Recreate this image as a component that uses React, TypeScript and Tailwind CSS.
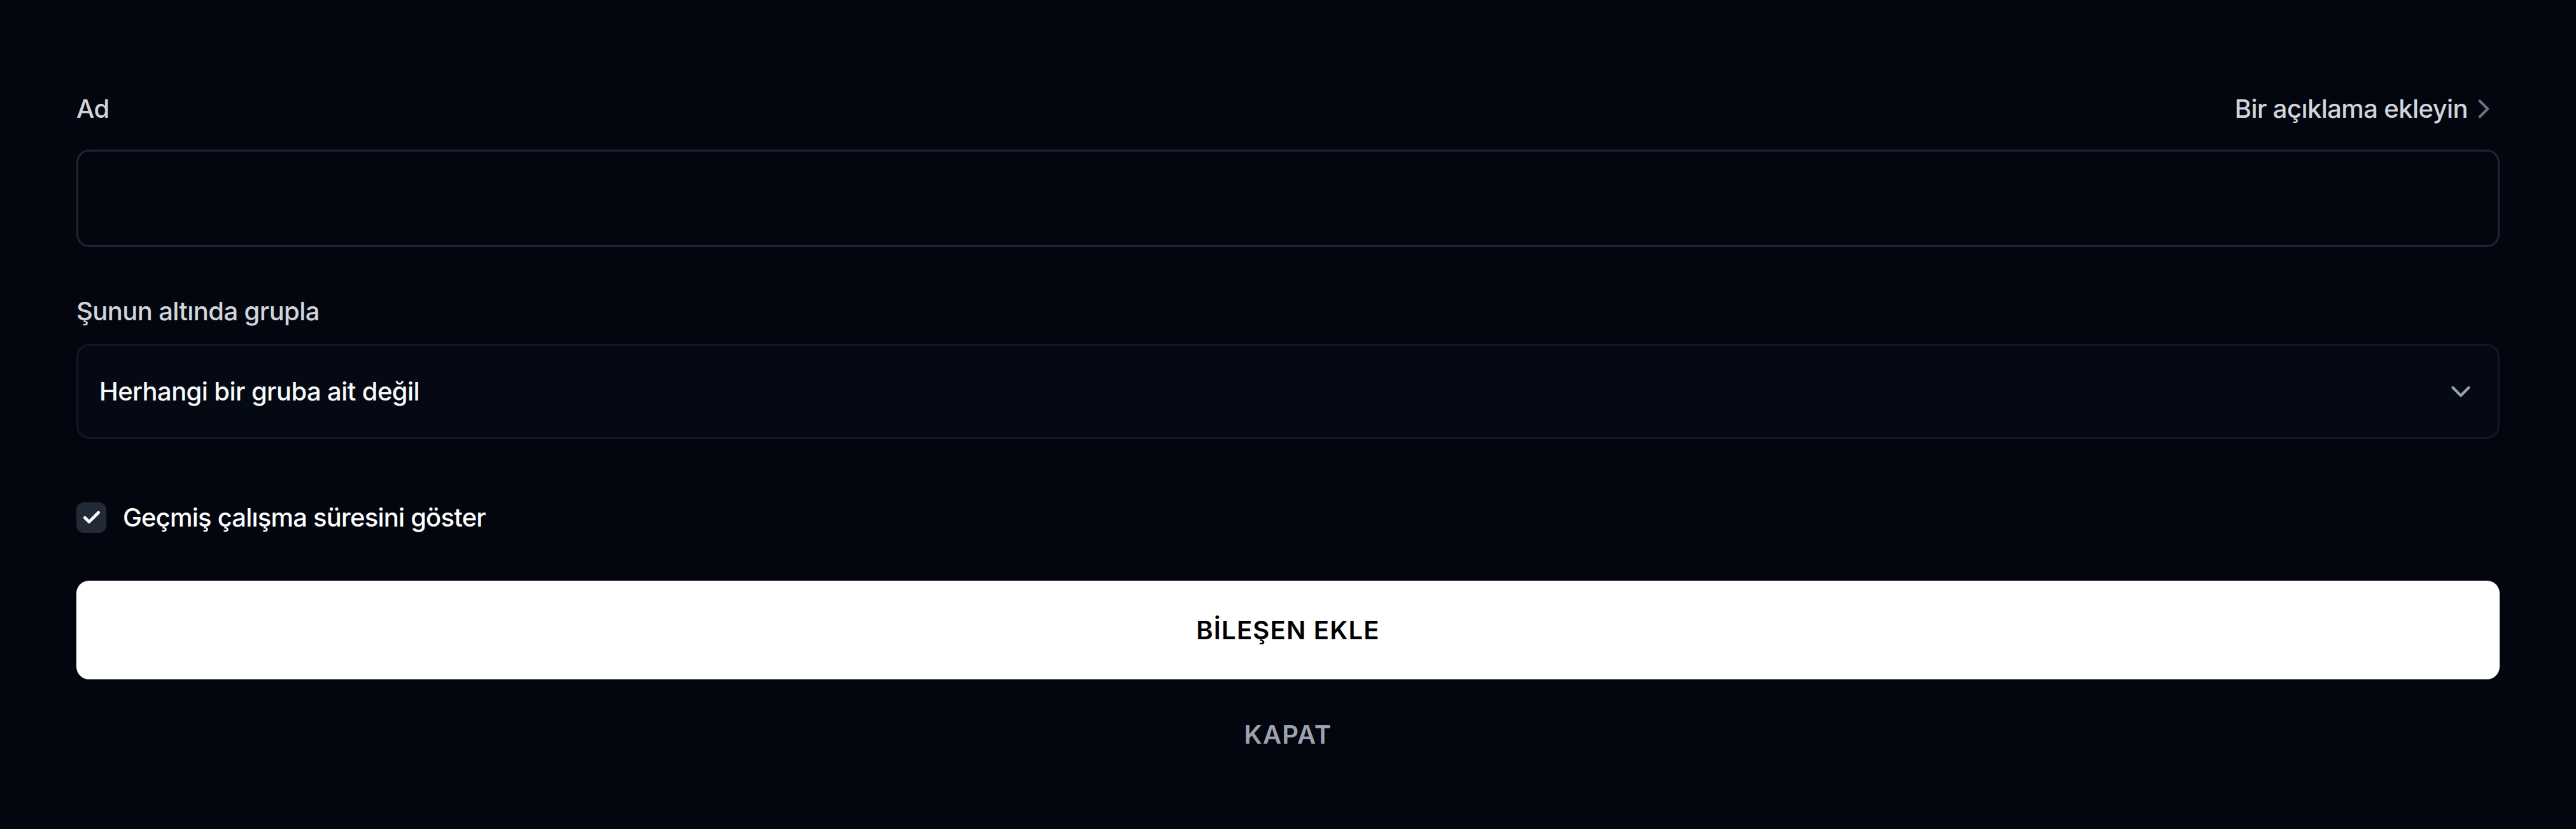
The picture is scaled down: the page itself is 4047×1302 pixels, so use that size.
import { Check, ChevronDown, ChevronRight } from "lucide-react";

export default function App() {
  return (
    <div className="min-h-screen bg-[#03060f] px-[120px] pt-[141px] font-['Inter','Noto_Sans',sans-serif]">
      {/* Name row */}
      <div className="flex h-[60px] items-center justify-between">
        <label className="text-[40px] leading-[60px] font-medium tracking-[-0.015em] text-[#d1d5db]">Ad</label>
        <button className="flex items-center text-[40px] leading-[60px] font-medium tracking-[-0.015em] text-[#d1d5db]">
          Bir açıklama ekleyin
          <ChevronRight size={50} strokeWidth={2} className="text-[#6b7280]" />
        </button>
      </div>
      <div className="mt-[34px] h-[153px] rounded-[20px] border-[3px] border-[#1f2633] bg-[#03060f]" />

      {/* Group select */}
      <div className="mt-[71px] text-[40px] leading-[60px] font-medium tracking-[-0.015em] text-[#d1d5db]">
        Şunun altında grupla
      </div>
      <div className="mt-[21px] flex h-[149px] items-center justify-between rounded-[20px] border-[3px] border-[#121826] bg-[#050913] px-[33px]">
        <span className="text-[40px] leading-[60px] font-medium tracking-[-0.015em] text-[#f9fafb]">
          Herhangi bir gruba ait değil
        </span>
        <ChevronDown size={50} strokeWidth={2} className="text-[#9ca3af]" />
      </div>

      {/* Checkbox */}
      <div className="mt-[100px] flex h-[48px] items-center gap-[26px]">
        <div className="flex h-[48px] w-[47px] items-center justify-center rounded-[12px] bg-[#222a38]">
          <Check size={32} strokeWidth={3.6} className="text-white" />
        </div>
        <span className="text-[40px] leading-[60px] font-medium tracking-[-0.02em] text-white">
          Geçmiş çalışma süresini göster
        </span>
      </div>

      {/* Actions */}
      <button className="mt-[75px] flex h-[155px] w-full items-center justify-center rounded-[20px] bg-white text-[40px] font-semibold tracking-[0.03em] text-black">
        BİLEŞEN EKLE
      </button>
      <div className="mt-[57px] text-center text-[40px] leading-[60px] font-semibold tracking-[0.03em] text-[#9ca3af]">
        KAPAT
      </div>
    </div>
  );
}
